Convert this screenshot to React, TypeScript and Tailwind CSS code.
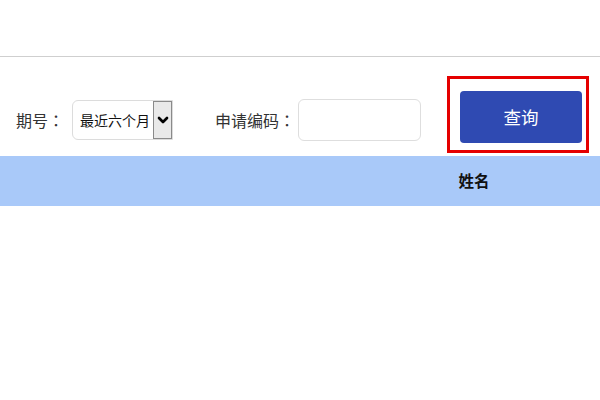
import { FiChevronDown } from "react-icons/fi";

const font = {
  fontFamily: '"Microsoft YaHei", "Noto Sans CJK SC", "Noto Sans", sans-serif',
};

// centred fullwidth colon, as the TC face draws it
function Colon() {
  return <span style={{ fontFamily: '"Noto Sans CJK TC", sans-serif' }}>：</span>;
}

function PeriodSelect() {
  return (
    <div className="flex h-[40px] w-[101px] items-center rounded-l-[6px] border border-[#dcdcdc] bg-white">
      <span className="flex-1 whitespace-nowrap pl-[7px] text-[14px] text-[#111] leading-none">
        最近六个月
      </span>
      <div className="flex h-[38px] w-[19px] shrink-0 items-center justify-center border border-[#8a8a8a] bg-[#e9e9e9]">
        <FiChevronDown className="size-[16px] text-black" strokeWidth={4} />
      </div>
    </div>
  );
}

export default function App() {
  return (
    <div className="h-[400px] w-[600px] bg-white text-[#333]" style={font}>
      <div className="h-[56px]" />
      <div className="h-px bg-[#cfcfcf]" />
      <div className="flex h-[99px] items-center pl-[16px] pt-[27px]">
        <span className="whitespace-nowrap text-[16px]">
          期号
          <Colon />
        </span>
        <div className="ml-[8px]">
          <PeriodSelect />
        </div>
        <span className="ml-[42px] whitespace-nowrap text-[16px]">
          申请编码
          <Colon />
        </span>
        <input className="ml-[3px] h-[42px] w-[123px] rounded-[6px] border border-[#dedede] bg-white outline-none" />
        <div className="relative ml-[39px] -mt-[6px]">
          <button className="h-[52px] w-[122px] rounded-[4px] bg-[#2f4ab2] text-[17.5px] text-white">
            查询
          </button>
          <div className="pointer-events-none absolute -left-[13px] -right-[7px] -top-[15px] -bottom-[10px] border-[3px] border-[#e50000]" />
        </div>
      </div>
      <div className="grid h-[50px] grid-cols-[440px_68px_1fr] items-center bg-[#a9c9f9]">
        <div />
        <div className="text-center text-[15.5px] font-bold text-[#111]">姓名</div>
        <div />
      </div>
    </div>
  );
}
